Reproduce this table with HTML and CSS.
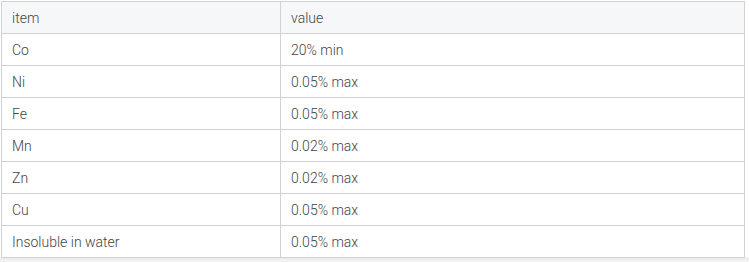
FILE: index.html
```html
<!DOCTYPE html>
<html>
<head>
<meta charset="utf-8">
<link rel="stylesheet" href="styles.css">
</head>
<body>
<div class="wrap">
<table class="spec">
<thead>
<tr><th class="c1">item</th><th>value</th></tr>
</thead>
<tbody>
<tr><td>Co</td><td>20% min</td></tr>
<tr><td>Ni</td><td>0.05% max</td></tr>
<tr><td>Fe</td><td>0.05% max</td></tr>
<tr><td>Mn</td><td>0.02% max</td></tr>
<tr><td>Zn</td><td>0.02% max</td></tr>
<tr><td>Cu</td><td>0.05% max</td></tr>
<tr><td>Insoluble in water</td><td>0.05% max</td></tr>
</tbody>
</table>
</div>
</body>
</html>
```
FILE: styles.css
```css
html, body {
  margin: 0;
  padding: 0;
  background: #ffffff;
}
.wrap {
  padding: 1px 0 0 1px;
  background: linear-gradient(to bottom, #ffffff 0, #ffffff 257px, #ececec 258px, #f4f4f4 262px);
  height: 261px;
}
.spec {
  border-collapse: collapse;
  width: 744px;
  font-family: Roboto, "Liberation Sans", sans-serif;
  font-size: 14px;
  font-weight: 300;
  color: #444444;
  table-layout: fixed;
  background: #fff;
}
.spec th, .spec td {
  border: 1px solid #d2d2d2;
  padding: 0 10px;
  text-align: left;
  font-weight: 300;
  box-sizing: border-box;
  height: 32px;
}
.spec th {
  background: #f5f7f9;
}
.spec .c1 {
  width: 279px;
}
```
